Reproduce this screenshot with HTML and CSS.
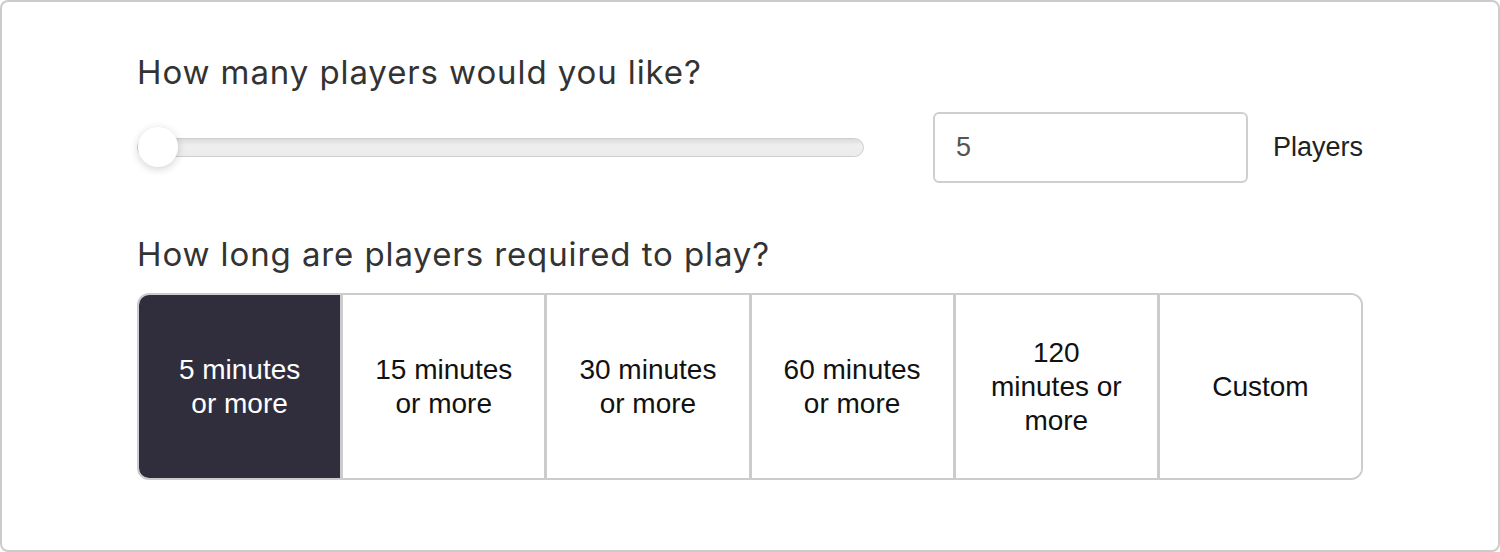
FILE: index.html
```html
<!DOCTYPE html>
<html lang="en">
<head>
<meta charset="utf-8">
<title>Players</title>
<link rel="stylesheet" href="styles.css">
</head>
<body>
<div class="panel">
  <h2 class="question">How many players would you like?</h2>
  <div class="players-row">
    <input class="slider" type="range" min="5" max="100" value="5">
    <input class="count" type="text" value="5">
    <span class="unit">Players</span>
  </div>
  <h2 class="question q2">How long are players required to play?</h2>
  <div class="options">
    <button class="opt selected">5 minutes<br>or more</button>
    <button class="opt">15 minutes<br>or more</button>
    <button class="opt">30 minutes<br>or more</button>
    <button class="opt">60 minutes<br>or more</button>
    <button class="opt">120<br>minutes or<br>more</button>
    <button class="opt">Custom</button>
  </div>
</div>
</body>
</html>
```
FILE: styles.css
```css
* { box-sizing: border-box; }
html, body { margin: 0; padding: 0; background: #fff; }
.panel {
  width: 1500px;
  height: 552px;
  border: 2px solid #cccccc;
  border-radius: 8px;
  padding: 50px 135px 0 135px;
  display: flex;
  flex-direction: column;
}
.question {
  margin: 0;
  font-family: Inter, "Noto Sans", sans-serif;
  font-weight: 400;
  font-size: 33px;
  line-height: 40px;
  color: #333333;
  letter-spacing: 0.9px;
}
.q2 { margin-top: 52px; }
.players-row {
  margin-top: 20px;
  display: flex;
  align-items: center;
  height: 70px;
}
.slider {
  -webkit-appearance: none;
  appearance: none;
  width: 727px;
  height: 40px;
  margin: 0;
  padding: 0;
  background: transparent;
}
.slider::-webkit-slider-runnable-track {
  height: 19px;
  border: 1px solid #cfcfcf;
  border-radius: 10px;
  background: linear-gradient(#dcdcdc, #efefef 40%, #ececec);
}
.slider::-webkit-slider-thumb {
  -webkit-appearance: none;
  appearance: none;
  width: 40px;
  height: 40px;
  margin-top: -11.5px;
  border-radius: 50%;
  background: #ffffff;
  box-shadow: 0 2px 8px rgba(0,0,0,0.18);
  border: none;
}
.count {
  margin-left: 69px;
  width: 315px;
  height: 71px;
  border: 2px solid #cfcfcf;
  border-radius: 6px;
  padding: 0 0 0 21px;
  font-family: "Liberation Sans", Arial, sans-serif;
  font-size: 27px;
  color: #555555;
  outline: none;
}
.unit {
  margin-left: 25px;
  font-family: "Liberation Sans", Arial, sans-serif;
  font-size: 27px;
  color: #222222;
}
.options {
  margin-top: 19px;
  display: flex;
  height: 187px;
  border: 2px solid #cccccc;
  border-radius: 12px;
  overflow: hidden;
}
.opt {
  flex: 1 1 0;
  margin: 0;
  padding: 0 10px;
  border: none;
  border-left: 3px solid #cccccc;
  background: #ffffff;
  font-family: "Liberation Sans", Arial, sans-serif;
  font-size: 28px;
  line-height: 34px;
  color: #111111;
  text-align: center;
}
.opt:first-child { border-left: none; }
.opt.selected {
  background: #302e3c;
  color: #ffffff;
}
```
